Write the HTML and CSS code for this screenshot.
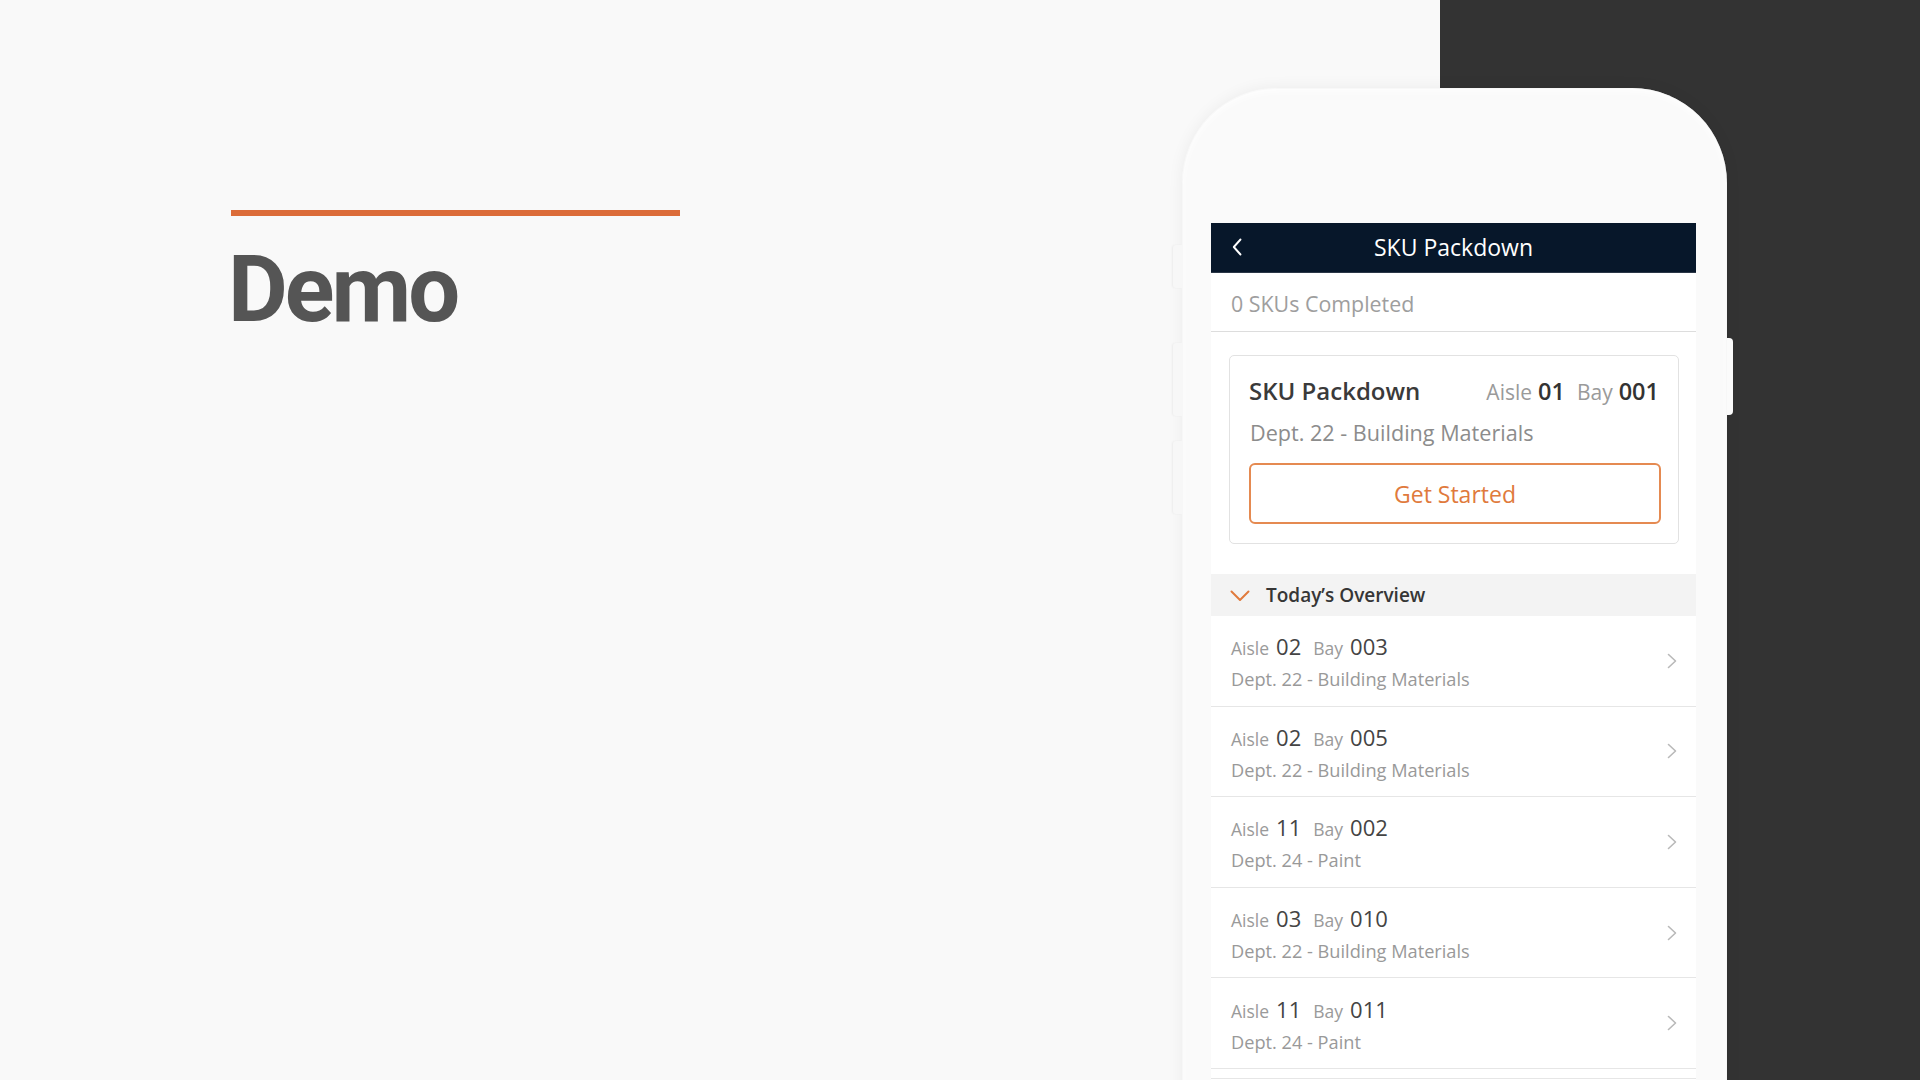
FILE: index.html
```html
<!DOCTYPE html>
<html lang="en">
<head>
<meta charset="utf-8">
<title>Demo - SKU Packdown</title>
<link rel="stylesheet" href="styles.css">
</head>
<body>
<div class="stage">
  <section class="intro">
    <div class="rule"></div>
    <h1 class="title">Demo</h1>
  </section>

  <div class="phone">
    <span class="side-btn side-btn-1"></span>
    <span class="side-btn side-btn-2"></span>
    <span class="side-btn side-btn-3"></span>
    <span class="power-btn"></span>

    <div class="screen">
      <header class="app-header">
        <svg class="back" viewBox="0 0 10 18" width="10" height="18"><path d="M8.5 1.5 L1.8 9 L8.5 16.5" fill="none" stroke="#fff" stroke-width="1.9" stroke-linecap="round" stroke-linejoin="round"/></svg>
        <span class="app-title">SKU Packdown</span>
      </header>

      <div class="status">0 SKUs Completed</div>

      <div class="card">
        <div class="card-top">
          <span class="card-title">SKU Packdown</span>
          <span class="card-loc"><span class="lbl">Aisle</span><b>01</b><span class="lbl lbl-bay">Bay</span><b>001</b></span>
        </div>
        <div class="card-dept">Dept. 22 - Building Materials</div>
        <button class="start-btn">Get Started</button>
      </div>

      <div class="overview">
        <svg class="ov-chev" viewBox="0 0 20 12" width="20" height="12"><path d="M1.5 1.5 L10 10 L18.5 1.5" fill="none" stroke="#e07a3c" stroke-width="2" stroke-linecap="round" stroke-linejoin="round"/></svg>
        <span>Today’s Overview</span>
      </div>

      <ul class="rows">
        <li class="row">
          <div class="row-text">
            <div class="row-loc"><span class="lbl">Aisle</span><span class="num">02</span><span class="lbl lbl-bay">Bay</span><span class="num">003</span></div>
            <div class="row-dept">Dept. 22 - Building Materials</div>
          </div>
          <svg class="row-chev" viewBox="0 0 10 16" width="10" height="16"><path d="M1.5 1.5 L8.5 8 L1.5 14.5" fill="none" stroke="#b9b9b9" stroke-width="1.6" stroke-linecap="round" stroke-linejoin="round"/></svg>
        </li>
        <li class="row">
          <div class="row-text">
            <div class="row-loc"><span class="lbl">Aisle</span><span class="num">02</span><span class="lbl lbl-bay">Bay</span><span class="num">005</span></div>
            <div class="row-dept">Dept. 22 - Building Materials</div>
          </div>
          <svg class="row-chev" viewBox="0 0 10 16" width="10" height="16"><path d="M1.5 1.5 L8.5 8 L1.5 14.5" fill="none" stroke="#b9b9b9" stroke-width="1.6" stroke-linecap="round" stroke-linejoin="round"/></svg>
        </li>
        <li class="row">
          <div class="row-text">
            <div class="row-loc"><span class="lbl">Aisle</span><span class="num">11</span><span class="lbl lbl-bay">Bay</span><span class="num">002</span></div>
            <div class="row-dept">Dept. 24 - Paint</div>
          </div>
          <svg class="row-chev" viewBox="0 0 10 16" width="10" height="16"><path d="M1.5 1.5 L8.5 8 L1.5 14.5" fill="none" stroke="#b9b9b9" stroke-width="1.6" stroke-linecap="round" stroke-linejoin="round"/></svg>
        </li>
        <li class="row">
          <div class="row-text">
            <div class="row-loc"><span class="lbl">Aisle</span><span class="num">03</span><span class="lbl lbl-bay">Bay</span><span class="num">010</span></div>
            <div class="row-dept">Dept. 22 - Building Materials</div>
          </div>
          <svg class="row-chev" viewBox="0 0 10 16" width="10" height="16"><path d="M1.5 1.5 L8.5 8 L1.5 14.5" fill="none" stroke="#b9b9b9" stroke-width="1.6" stroke-linecap="round" stroke-linejoin="round"/></svg>
        </li>
        <li class="row">
          <div class="row-text">
            <div class="row-loc"><span class="lbl">Aisle</span><span class="num">11</span><span class="lbl lbl-bay">Bay</span><span class="num">011</span></div>
            <div class="row-dept">Dept. 24 - Paint</div>
          </div>
          <svg class="row-chev" viewBox="0 0 10 16" width="10" height="16"><path d="M1.5 1.5 L8.5 8 L1.5 14.5" fill="none" stroke="#b9b9b9" stroke-width="1.6" stroke-linecap="round" stroke-linejoin="round"/></svg>
        </li>
        <li class="row row-partial"></li>
      </ul>
    </div>
  </div>
</div>
</body>
</html>
```

FILE: styles.css
```css
* { box-sizing: border-box; }

html, body {
  margin: 0;
  padding: 0;
  width: 1920px;
  height: 1080px;
  overflow: hidden;
}

body {
  font-family: "Open Sans", "Noto Sans", sans-serif;
}

.stage {
  display: flex;
  width: 1920px;
  height: 1080px;
  overflow: hidden;
  background: linear-gradient(to right, #f9f9f9 0, #f9f9f9 1440px, #333333 1440px, #333333 100%);
}

/* ---------- left intro ---------- */
.intro {
  flex: none;
  width: 1182px;
  padding: 210px 0 0 231px;
}

.rule {
  width: 449px;
  height: 6px;
  background: #dc6c39;
}

.title {
  margin: 28px 0 0 -3px;
  font-family: Roboto, "Liberation Sans", sans-serif;
  font-weight: 700;
  font-size: 92px;
  line-height: 92px;
  letter-spacing: -3px;
  color: #555555;
}

/* ---------- phone ---------- */
.phone {
  position: relative;
  flex: none;
  width: 545px;
  height: 1100px;
  margin-top: 88px;
  padding: 135px 31px 0 29px;
  border-radius: 95px 95px 0 0;
  background: #fafafa;
  box-shadow: 0 0 16px rgba(0, 0, 0, 0.06), inset 0 0 0 1px rgba(0, 0, 0, 0.02), inset 0 3px 8px rgba(255, 255, 255, 0.9);
}

.side-btn {
  position: absolute;
  left: -9px;
  width: 9px;
  border-radius: 3px 0 0 3px;
  background: #f7f7f7;
  box-shadow: -1px 0 2px rgba(0, 0, 0, 0.05);
}
.side-btn-1 { top: 157px; height: 43px; }
.side-btn-2 { top: 255px; height: 73px; }
.side-btn-3 { top: 353px; height: 73px; }

.power-btn {
  position: absolute;
  right: -6px;
  top: 250px;
  width: 6px;
  height: 77px;
  border-radius: 0 4px 4px 0;
  background: #fbfbfb;
}

.screen {
  height: 100%;
  background: #ffffff;
}

/* header */
.app-header {
  position: relative;
  display: flex;
  align-items: center;
  justify-content: center;
  height: 50px;
  background: #07172a;
  border-bottom: 1px solid #2b3747;
}

.back {
  position: absolute;
  left: 21px;
  top: 15px;
}

.app-title {
  color: #ffffff;
  font-size: 23px;
  line-height: 30px;
  margin-top: -2px;
}

/* status */
.status {
  height: 59px;
  padding: 16px 0 0 20px;
  font-size: 21.4px;
  line-height: 30px;
  color: #9e9e9e;
  border-bottom: 1px solid #dddddd;
}

/* card */
.card {
  margin: 23px 17px 0 18px;
  height: 189px;
  padding: 18px 17px 0 19px;
  border: 1px solid #e2e2e2;
  border-radius: 5px;
}

.card-top {
  display: flex;
  justify-content: space-between;
  align-items: baseline;
  height: 34px;
  line-height: 34px;
  padding-right: 2px;
}

.card-title {
  font-size: 24px;
  font-weight: 600;
  color: #3a3a3a;
}

.card-loc {
  font-size: 21px;
  color: #9a9a9a;
}
.card-loc b {
  font-size: 23.5px;
  font-weight: 600;
  color: #333333;
  margin-left: 6px;
}
.card-loc .lbl-bay { margin-left: 12px; }

.card-dept {
  margin-top: 10px;
  height: 30px;
  line-height: 30px;
  font-size: 21.6px;
  color: #8c8c8c;
  padding-left: 1px;
}

.start-btn {
  display: block;
  width: 100%;
  height: 61px;
  margin-top: 15px;
  border: 2px solid #e58a51;
  border-radius: 6px;
  background: #ffffff;
  font-family: "Open Sans", sans-serif;
  font-size: 23px;
  color: #e07a3c;
  padding: 0;
}

/* overview bar */
.overview {
  display: flex;
  align-items: center;
  height: 42px;
  margin-top: 30px;
  padding-left: 19px;
  background: #f3f3f3;
  font-size: 19px;
  font-weight: 600;
  color: #363636;
}
.ov-chev { margin-right: 16px; margin-top: 1px; }

/* rows */
.rows {
  list-style: none;
  margin: 0;
  padding: 0;
}

.row {
  display: flex;
  align-items: center;
  justify-content: space-between;
  height: 90.6px;
  padding: 0 19px 0 20px;
  border-bottom: 1px solid #e6e6e6;
}

.row-text { padding-top: 1px; }

.row-loc {
  display: flex;
  align-items: baseline;
  height: 30px;
  line-height: 30px;
}

.row-loc .lbl {
  font-size: 17.5px;
  color: #9a9a9a;
}
.row-loc .num {
  font-size: 22px;
  color: #444444;
  margin-left: 7px;
}
.row-loc .lbl-bay { margin-left: 12px; }

.row-dept {
  margin-top: 6px;
  font-size: 18.2px;
  line-height: 24px;
  color: #999999;
}

.row-partial {
  height: 20px;
  margin-top: 9px;
  border-top: 1px solid #e6e6e6;
  border-bottom: none;
}
```
